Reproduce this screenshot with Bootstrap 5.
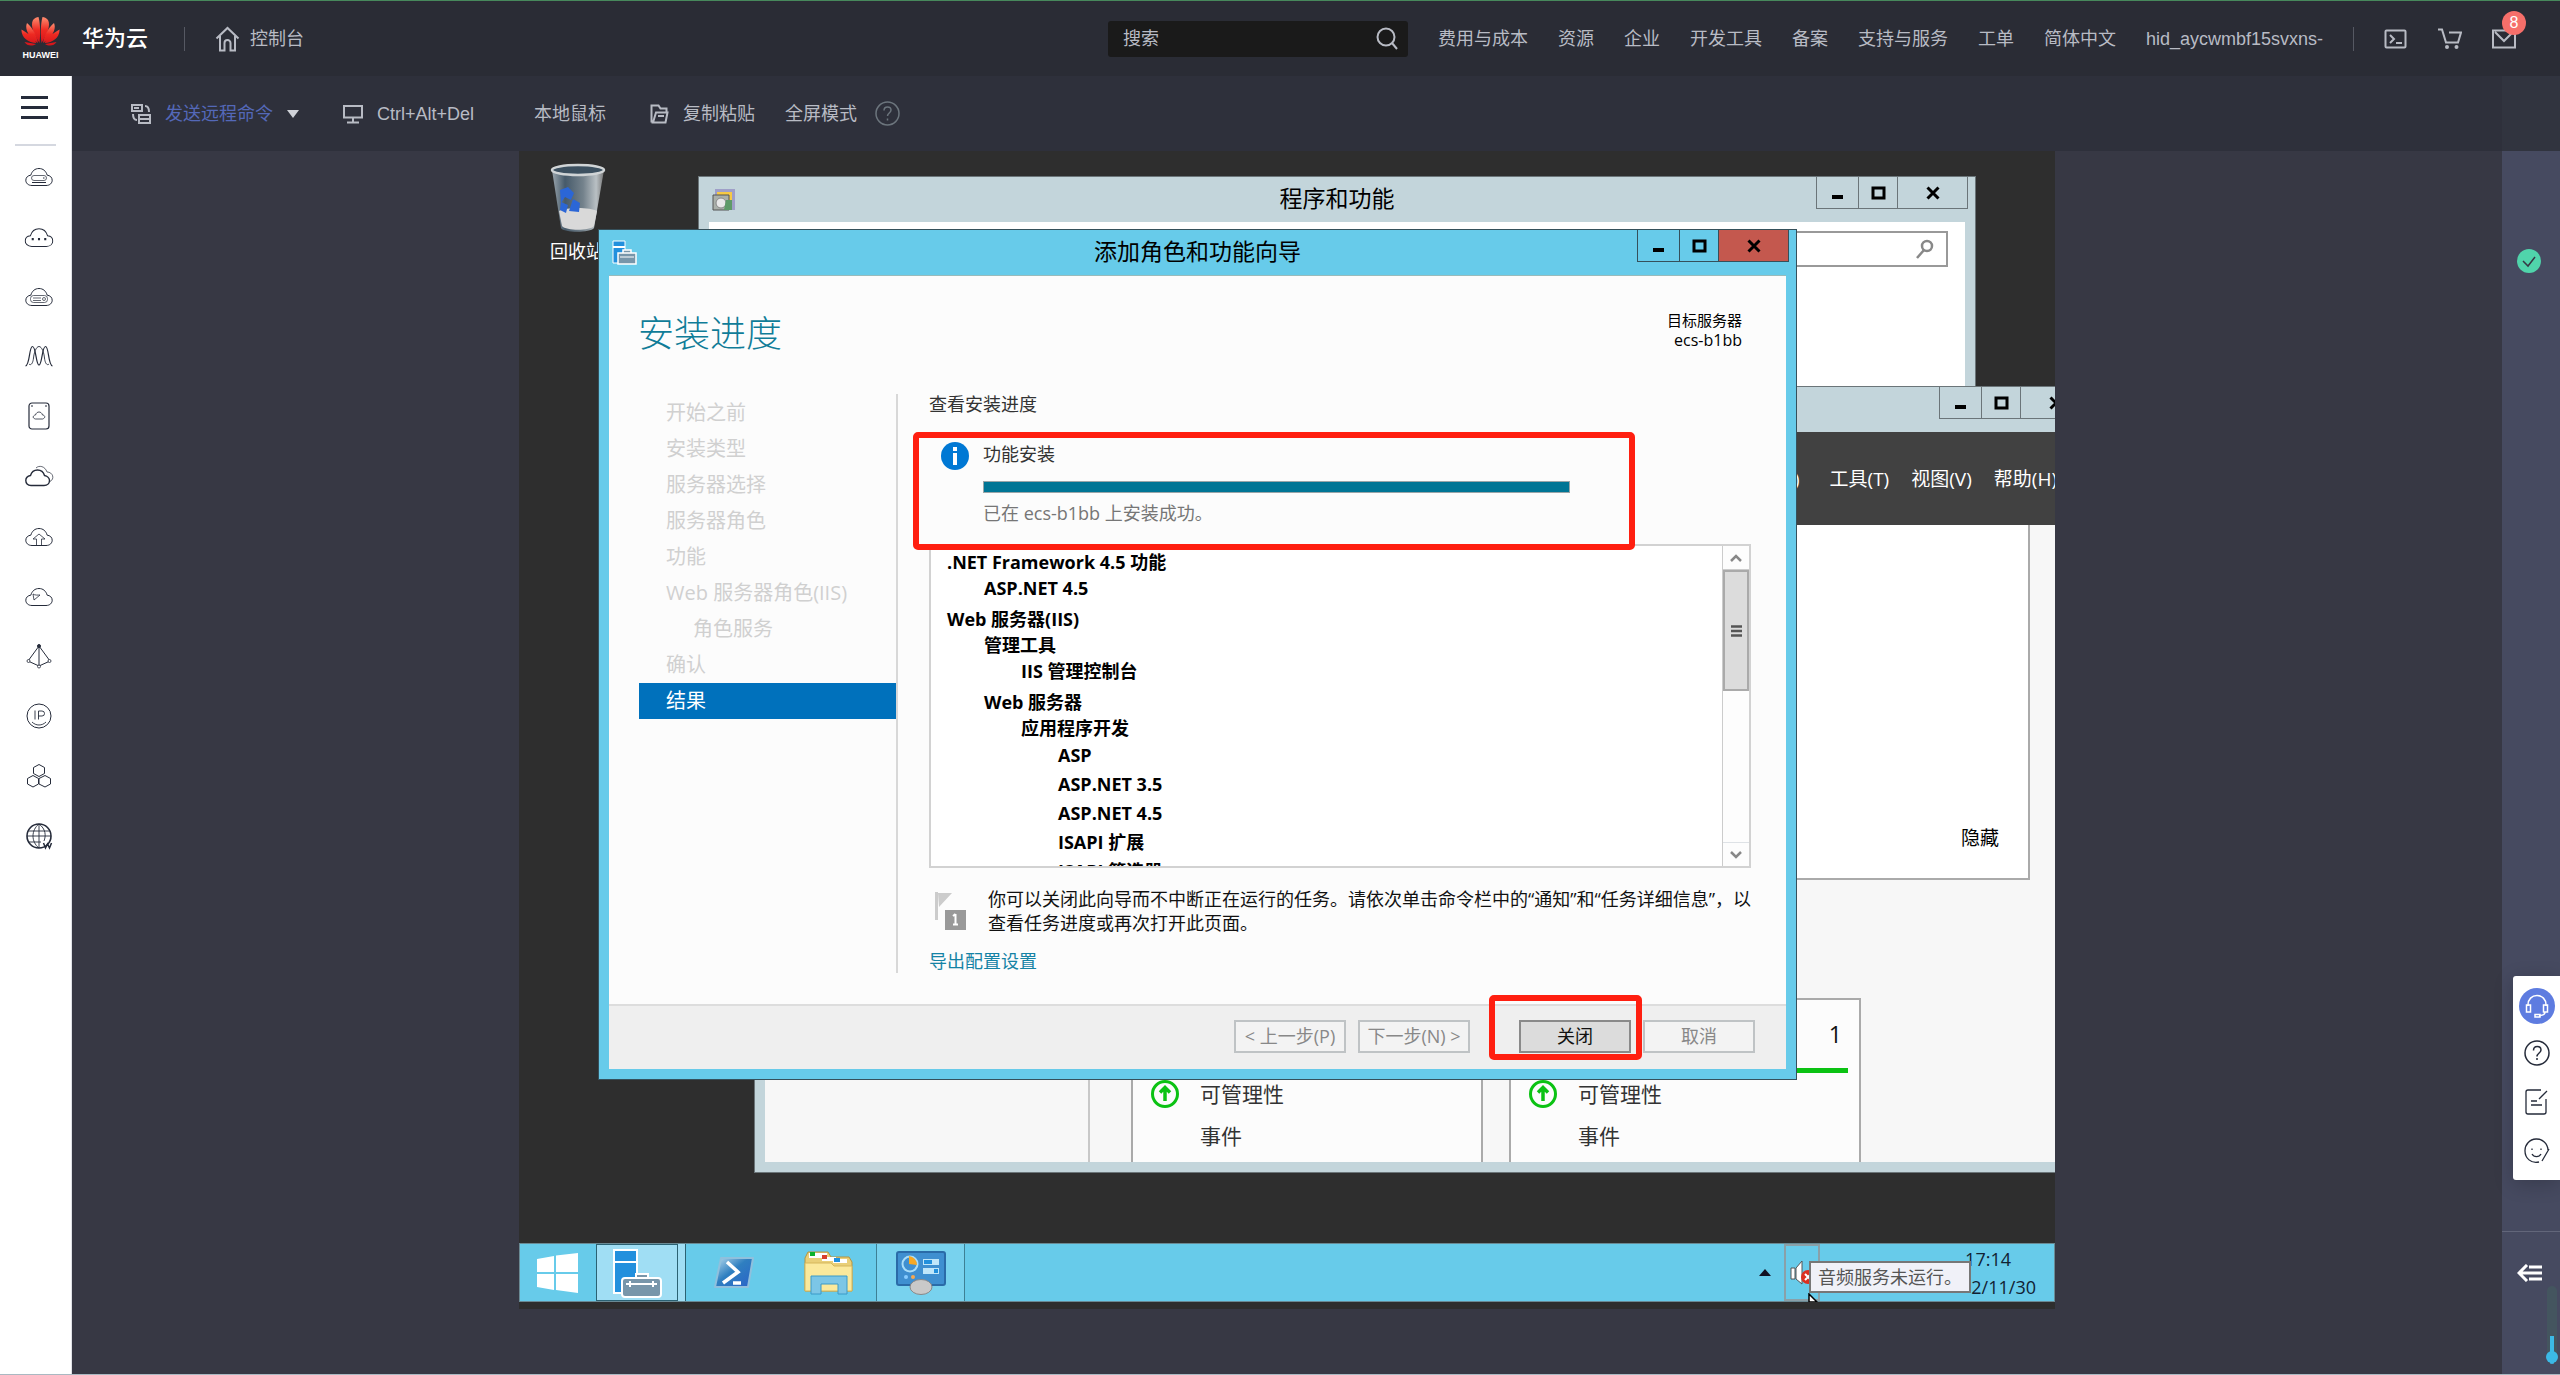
<!DOCTYPE html>
<html lang="zh-CN">
<head>
<meta charset="utf-8">
<meta name="viewport" content="width=device-width, initial-scale=1">
<title>华为云 控制台 - 远程登录</title>
<link href="https://cdn.jsdelivr.net/npm/bootstrap@5.3.0/dist/css/bootstrap.min.css" rel="stylesheet">
<style>
  body{background:#373844;font:18px/24px "Liberation Sans","Noto Sans CJK SC",sans-serif;color:#b8bbc4;overflow-x:hidden}
  a{color:inherit;text-decoration:none}
  button{font:inherit;color:inherit;background:none;border:0;padding:0}
  svg{display:block;flex:none}
  .ico{fill:none;stroke:currentColor}

  /* top bar */
  .topbar{height:76px;background:#2a2c35;border-top:1px solid #47895c;padding:0 44px 0 21px}
  .brand-mark{width:39px}
  .brand-mark span{font:bold 9px/10px "Liberation Sans",sans-serif;color:#fff}
  .brand-name{font-size:22px;font-weight:500;color:#fff;margin:0 36px 0 22px}
  .homelink{margin-left:30px;gap:10px}
  .vline{width:1px;height:24px;background:#565963}
  .searchbox{width:300px;height:36px;background:#1a1a1a;border-radius:3px;padding:0 10px 0 15px}
  .searchbox input,.winsearch input{flex:1;min-width:0;background:none;border:0;outline:0;color:#b8bbc4;padding:0}
  .searchbox input::placeholder{color:#b8bbc4;opacity:1}
  .topnav{gap:30px;margin-left:30px}
  .mailbox .count{position:absolute;left:10px;top:-18px;width:24px;height:24px;border-radius:50%;background:#f66f6a;color:#fff;font-size:16px;text-align:center}

  /* tool bar and side rails */
  .siderail{width:72px;background:#fff;border-right:1px solid #dfe1e6;color:#252b3a}
  .siderail .burger{height:68px;padding:0 0 4px 21px}
  .siderail hr{width:41px;margin:0 0 0 15px;border-top:2px solid #d5d8e0;opacity:1}
  .siderail a{height:60px;padding-left:7px}
  .toolbar{height:75px;background:#2e303b;padding-left:59px}
  .toolbar .cmd{color:#5468b8}
  .toolbar .cmd,.toolbar button{gap:14px;margin-right:44px}
  .toolbar .cad{margin-right:60px}
  .toolbar .paste{margin-right:30px}
  .toolbar .full{margin-right:18px}
  .rightrail{width:58px;background:#464a60}
  .rightrail .railtop{height:75px;background:#31343f}
  .okmark{margin:98px auto 0 15px;width:24px;height:24px;border-radius:50%;background:#50d4ab}
  .helpdock{width:47px;height:204px;margin-top:703px;background:#fff;color:#252b3a;border-radius:3px 0 0 3px;box-shadow:0 4px 20px rgba(0,0,0,.2);padding:12px 0}
  .helpdock a{height:49px}
  .helpdock .agent{width:36px;height:36px;border-radius:50%;background:#5e7ce0;color:#fff}
  .collapse-row{margin-top:51px;border-top:1px solid #62667a;padding:32px 0 0 15px;color:#fff}
  .volume{position:absolute;right:-31px;bottom:44px;width:78px;height:10px;margin:0;transform:rotate(-90deg);appearance:none;border-radius:5px;background:linear-gradient(#3cb9e6,#3cb9e6) 0 50%/28px 4px no-repeat,#44555f}
  .volume::-webkit-slider-thumb{appearance:none;width:12px;height:12px;border-radius:50%;background:#3cb9e6}
  .pageend{height:1px;background:#aab9c2}

  /* remote screen */
  .remote{max-width:1536px;background:#2e2e2e;font-family:"Open Sans","Noto Sans CJK SC",sans-serif;color:#000;padding-bottom:7px}
  .desktop{height:1092px;position:relative;overflow:hidden}
  .binitem{position:absolute;left:31px;top:12px;width:56px;color:#fff;white-space:nowrap}
  .binitem svg{margin-bottom:6px}
  .win{position:absolute;background:#c3d5db;border:1px solid #6b7579;display:flex;flex-direction:column}
  .win.active{background:#67cbea;border-color:#35505b}
  .titlebar{height:45px;display:grid;grid-template-columns:1fr auto 1fr;padding:0 7px}
  .titlebar .wicon{align-self:center;margin-left:6px}
  .titlebar .wtitle{font-size:23px;line-height:43px}
  .winbtns{justify-self:end;height:32px;border:1px solid #6b7579;border-top:0}
  .active .winbtns{border-color:#35505b}
  .winbtns button{width:39px;height:31px;border-right:1px solid #6b7579;display:flex;align-items:center;justify-content:center}
  .winbtns button:first-child{width:42px}
  .winbtns button:last-child{width:69px;border:0}
  .active .winbtns button:not(:last-child){border-color:#35505b}
  .active .winbtns button:last-child{background:#c4584e}
  .winbody{flex:1;margin:0 10px 10px;min-height:0}

  .w-prog{left:179px;top:25px;width:1278px;height:400px}
  .winsearch{width:300px;height:36px;border:2px solid #999;padding:0 12px;margin:9px 17px 0 auto}
  .w-server{left:235px;top:235px;width:1345px;height:787px}
  .w-server .winbody{background:#f7f7f7}
  .srvmenu{height:93px;background:#414141;color:#fff;gap:22px;padding-right:31px;font-size:19px}
  .srvnav{width:325px;border-right:2px solid #c8c8c8}
  .srvmain{padding-left:41px}
  .srvpanel{width:899px;height:355px;background:#fff;border:2px solid #aaa;border-top:0;padding:0 29px 28px;font-size:19px}
  .srvtiles{margin-top:118px;gap:26px}
  .tile{width:352px;background:#fcfcfc;border:2px solid #aaa;border-bottom:0;font-size:21px;color:#333}
  .tilehead{height:73px;margin:0 11px;padding-right:6px;border-bottom:5px solid #0bc213;font-size:23px;color:#111}
  .tilerow{height:42px;padding-left:17px}
  .tilerow .slot{width:50px}

  .w-wizard{left:79px;top:78px;width:1199px;height:851px}
  .w-wizard .winbody{background:#fcfcfc;border-top:1px solid #9bb}
  .wizhead{height:118px;padding:0 44px 0 29px}
  .wizhead h1{font-size:36px;line-height:116px;font-weight:300;color:#107c98;margin:0}
  .wizhead .target{font-size:15px;line-height:20px;padding-top:34px}
  .wizhead .host{font-size:16px}
  .steps{width:289px;padding:1px 0 0 30px;border-right:2px solid #d8d8d8;height:579px;font-size:20px}
  .steps a{display:block;height:36px;line-height:36px;padding-left:27px;color:#d0d0d0;width:257px}
  .steps a.sub{padding-left:54px}
  .steps a.on{background:#0071bc;color:#fff}
  .wizmain{padding-left:31px;color:#333}
  .wizmain .lead-in{line-height:20px}
  .progbox{margin-top:28px;height:102px;padding-left:12px;position:relative}
  .progbox .cell{padding-left:14px}
  .progbox .state{color:#767676}
  .donebar{width:587px;height:12px;border-radius:0;border:1px solid #9aa5a8;background:#e6e6e6;margin:15px 0 8px}
  .donebar .progress-bar{background:#007595}
  .marker{position:absolute;border:6px solid #ff1f10;border-radius:5px;pointer-events:none}
  .progbox .marker{left:-16px;top:-10px;width:722px;height:118px}
  .listbox{width:822px;height:324px;border:2px solid #d2d2d2;background:#fff;color:#000}
  .tree{flex:1;overflow:hidden;padding:3px 0 0 16px;font-weight:700;line-height:26px}
  .tree ul{list-style:none;margin:0;padding:0 0 0 37px}
  .tree>div+div,.tree .sec{margin-top:5px}
  .tree .leaf{line-height:29px}
  .sbar{width:27px;border-left:1px solid #ccc;background:#fdfdfd;color:#888}
  .sbar .end{height:24px;border-bottom:1px solid #ccc}
  .sbar .thumb{height:121px;background:#dcdcdc;border:2px solid #aaa;color:#555}
  .note{padding:19px 0 0 6px;height:81px}
  .note p{margin:0;padding-left:22px;width:800px;color:#111}
  .export{color:#1583a5}
  .wizfoot{height:65px;background:#efefef;border-top:2px solid #ddd;padding:0 31px 2px 0}
  .wizfoot button{width:112px;height:33px;border:2px solid #bfc3c5;background:#f3f3f3;color:#888;line-height:29px}
  .wizfoot button.ok{background:#dcdcdc;border-color:#8a8a8a;color:#111}
  .wizfoot .next{margin-left:12px}
  .wizfoot .okwrap{position:relative;margin:0 12px 0 49px}
  .okwrap .marker{left:-30px;top:-25px;width:153px;height:65px}

  .taskbar{height:59px;background:#67cbea;border:1px solid #6a8a94}
  .taskbar button,.taskbar .stackedge{height:57px;display:flex;align-items:center;justify-content:center}
  .tb-start{width:76px}
  .tb-on{width:82px;background:#a0def4!important;border:1px solid #2b6273!important}
  .stackedge{width:8px;background:#a0def4;border-right:1px solid #2b6273}
  .tb-mid{width:95px}
  .tb-cp{width:89px;background:#78d2ee!important;border:solid #3d8095!important;border-width:0 1px!important}
  .tray{position:relative;padding-right:18px}
  .tb-snd{width:36px;border:2px solid #8aa0a8!important;margin:0 144px 0 13px}
  .clock{width:72px;text-align:right;line-height:28px;color:#123}
  .clock .hour{padding-right:25px}
  .tip{position:absolute;left:50px;top:17px;width:162px;height:32px;background:#f0f1f8;border:2px solid #777;line-height:28px;padding-left:7px;color:#555;white-space:nowrap}
  .cursor{position:absolute;left:49px;top:49px}
</style>
<script src="https://cdn.jsdelivr.net/npm/bootstrap@5.3.0/dist/js/bootstrap.bundle.min.js"></script>
</head>
<body class="min-vh-100 d-flex flex-column">

<svg width="0" height="0" class="position-absolute">
  <symbol id="cloud" viewBox="0 0 28 24"><path d="M7 21.500C3 21.500.8 19 .8 16.200c0-2.800 2.200-4.800 5-5C7 7 10 4.500 14 4.500s7 2.500 8.200 6.700c2.800.2 5 2.200 5 5 0 2.800-2.200 5.300-6.200 5.300z"/></symbol>
  <symbol id="mini" viewBox="0 0 14 14"><path d="M1.500 11h11" stroke-width="4"/></symbol>
  <symbol id="maxi" viewBox="0 0 14 14"><path d="M1.500 2h11v10h-11z" stroke-width="3"/></symbol>
  <symbol id="shut" viewBox="0 0 14 14"><path d="M1.500 1.500l11 11M12.500 1.500l-11 11" stroke-width="3"/></symbol>
  <symbol id="healthy" viewBox="0 0 30 30"><circle cx="15" cy="15" r="12.500" stroke-width="3"/><path d="M15 22V9M10 13.500L15 8.500l5 5" stroke-width="3.500"/></symbol>
</svg>

<header class="topbar d-flex align-items-center">
  <a href="#" class="d-flex align-items-center">
    <span class="brand-mark d-flex flex-column align-items-center gap-1">
      <svg width="39" height="29" viewBox="0 0 39 29"><defs><linearGradient id="hw" x1="0" y1="0" x2="0" y2="1"><stop offset="0" stop-color="#ff8e70"/><stop offset=".5" stop-color="#ee2a22"/><stop offset="1" stop-color="#d3131a"/></linearGradient></defs><g fill="url(#hw)"><path d="M18.500 26C13 17 9 9 12 3c1.500-2 4-3 5.500-3 2 7 2 18 1 26zM20.500 26C26 17 30 9 27 3c-1.500-2-4-3-5.500-3-2 7-2 18-1 26z"/><path d="M17 26C9 21 3 13 6 6c6 5 10 13 11 20zM22 26C30 21 36 13 33 6c-6 5-10 13-11 20zM15.500 26C7 26 0 20 .5 12.500 7 16 13 21 15.500 26zM23.500 26C32 26 39 20 38.500 12.500 32 16 26 21 23.500 26zM15 27C11 29.500 6 29 3.500 25zM24 27c4 2.500 9 2 11.500-2z"/></g></svg>
      <span>HUAWEI</span>
    </span>
    <span class="brand-name">华为云</span>
  </a>
  <span class="vline"></span>
  <a href="#" class="homelink d-flex align-items-center"><svg class="ico" width="25" height="26" viewBox="0 0 25 26" stroke-width="2"><path d="M1.500 12.500L12.500 2l11 10.500M5 10v14.500h4.500V17a3 3 0 0 1 6 0v7.500H20V10"/></svg><span>控制台</span></a>

  <div class="searchbox d-flex align-items-center ms-auto"><input type="text" placeholder="搜索" aria-label="搜索"><svg class="ico" width="22" height="23" viewBox="0 0 22 23" stroke-width="2"><circle cx="10" cy="10" r="8.500"/><path d="M16 16l5 6"/></svg></div>
  <nav class="topnav d-flex align-items-center">
    <a href="#">费用与成本</a><a href="#">资源</a><a href="#">企业</a><a href="#">开发工具</a><a href="#">备案</a><a href="#">支持与服务</a><a href="#">工单</a><a href="#">简体中文</a><a href="#">hid_aycwmbf15svxns-</a>
    <span class="vline"></span>
    <a href="#" aria-label="CloudShell"><svg class="ico" width="24" height="20" viewBox="0 0 24 20" stroke-width="2"><rect x="1.500" y="1.500" width="20" height="17" rx="1"/><path d="M6 6l4 4-4 4M12 14h6"/></svg></a>
    <a href="#" aria-label="购物车"><svg class="ico" width="24" height="22" viewBox="0 0 24 22" stroke-width="2"><path d="M0 1.500h4l4 13h12l3-10H11"/><circle cx="9" cy="19" r="1"/><circle cx="18.500" cy="19" r="1"/></svg></a>
    <a href="#" class="mailbox position-relative" aria-label="消息"><svg class="ico" width="24" height="20" viewBox="0 0 24 20" stroke-width="2"><path d="M1 1.500h22v17H1zM3 3l9 9 9-9"/></svg><span class="count">8</span></a>
  </nav>
</header>

<div class="d-flex flex-grow-1">
  <nav class="siderail d-flex flex-column">
    <button class="burger" aria-label="菜单"><svg class="ico" width="28" height="26" viewBox="0 0 28 26" stroke-width="3"><path d="M0 2.500h27M0 12.500h27M0 22.500h27"/></svg></button>
    <hr>
    <a href="#" class="d-flex align-items-center justify-content-center" aria-label="弹性云服务器"><svg class="ico" width="28" height="24" viewBox="0 0 28 24"><use href="#cloud"/><rect x="6.500" y="11.500" width="15" height="5" rx="2.500" stroke-width=".7"/><path d="M18 14h1.500M7 18.500h14"/></svg></a>
    <a href="#" class="d-flex align-items-center justify-content-center" aria-label="云耀"><svg class="ico" width="30" height="25" viewBox="0 0 28 24"><use href="#cloud"/><path d="M7 14.500h2M13 14.500h2M19 14.500h2" stroke-width="2"/></svg></a>
    <a href="#" class="d-flex align-items-center justify-content-center" aria-label="裸金属"><svg class="ico" width="28" height="24" viewBox="0 0 28 24"><use href="#cloud"/><g stroke-width=".7"><rect x="5.500" y="11.500" width="17" height="7" rx="3"/><path d="M8 14h8M8 16.500h8"/><circle cx="19" cy="15" r="1.500"/></g></svg></a>
    <a href="#" class="d-flex align-items-center justify-content-center" aria-label="弹性伸缩"><svg class="ico" width="28" height="22" viewBox="0 0 28 22" stroke-width="1.200"><path d="M.5 21C5 20 4 1.500 7.500 1.500S11 20 14 20s3-18.500 6.500-18.500S23 20 27.500 21"/><path d="M4 19c2 2 4-1 4.500-6S11 1.500 14 1.500 19 8 19.500 13s2.500 8 4.500 6" stroke-width=".9"/></svg></a>
    <a href="#" class="d-flex align-items-center justify-content-center" aria-label="镜像"><svg class="ico" width="22" height="28" viewBox="0 0 22 28" stroke-width="1.200"><rect x="1" y="1" width="20" height="26" rx="3"/><path d="M3 4h2M17 4h2"/><path d="M7.500 17c-4-1-2-4 0-4 1-4 6-4 7 0 2.500 0 3.500 3 0 4z" stroke-width=".8"/></svg></a>
    <a href="#" class="d-flex align-items-center justify-content-center" aria-label="云硬盘"><svg class="ico" width="29" height="22" viewBox="0 0 29 22"><path d="M6 20.500C2.500 20.500.8 18 .8 15.500S3 11 5.500 10.500C6.500 7 9 5 12.500 5s6 2 7 5.500c2.500.5 5 2.500 5 5s-2 5-5.500 5z" stroke-width="1.400"/><path d="M11 3c3-3 9-2 11 4 6 0 8 7 3 9.500" stroke-width=".7"/></svg></a>
    <a href="#" class="d-flex align-items-center justify-content-center" aria-label="备份"><svg class="ico" width="28" height="24" viewBox="0 0 28 24"><use href="#cloud"/><path d="M11.500 21v-6H8l6-5 6 5h-3.500v6" stroke-width=".8"/></svg></a>
    <a href="#" class="d-flex align-items-center justify-content-center" aria-label="云监控"><svg class="ico" width="28" height="24" viewBox="0 0 28 24"><use href="#cloud"/><path d="M8 10c2 1.500 5 1 7 1l-6 5-1-6" stroke-width=".8"/></svg></a>
    <a href="#" class="d-flex align-items-center justify-content-center" aria-label="弹性负载"><svg class="ico" width="26" height="26" viewBox="0 0 26 26"><path d="M13 3L2 18l11 5 11-5zM13 3v20"/><circle cx="13" cy="3" r="1.500" fill="currentColor"/><g fill="#fff" stroke-width=".8"><circle cx="2.500" cy="18" r="1.500"/><circle cx="23.500" cy="18" r="1.500"/><circle cx="13" cy="23.500" r="1.500"/></g></svg></a>
    <a href="#" class="d-flex align-items-center justify-content-center" aria-label="弹性公网IP"><svg class="ico" width="26" height="26" viewBox="0 0 26 26"><circle cx="13" cy="13" r="12"/><path d="M9 7.500v9M12.500 16.500V8h3.500a2.500 2.500 0 0 1 0 5h-3.500M6 19c4 4 10 4 14 0" stroke-width=".9"/></svg></a>
    <a href="#" class="d-flex align-items-center justify-content-center" aria-label="资源编排"><svg class="ico" width="26" height="26" viewBox="0 0 26 26"><path d="M13 1.500l5.500 3v6L13 13.500l-5.500-3v-6zM7 12.500l5.500 3v5.500L7 24l-5.500-3v-5.500zM19 12.500l5.500 3v5.500L19 24l-6-3v-5.500z"/></svg></a>
    <a href="#" class="d-flex align-items-center justify-content-center" aria-label="域名"><svg class="ico" width="27" height="27" viewBox="0 0 27 27"><circle cx="13" cy="13" r="12" stroke-width="1.600"/><path d="M13 1v24M2 8h22M1 13h24M2 19h13M13 1C5 7 5 19 13 25M13 1c7 5 7 12 5 17" stroke-width=".9"/><path d="M17.500 20l2 5 2-4 2 4 2-5" stroke-width="1.500"/></svg></a>
  </nav>

  <div class="flex-grow-1 d-flex flex-column">
    <div class="toolbar d-flex align-items-center">
      <a href="#" class="cmd d-flex align-items-center">
        <svg width="20" height="20" viewBox="0 0 20 20" fill="none" stroke="#b8bbc4" stroke-width="2"><path d="M1 1h10v6H1zM8 11h11v8H8zM8 15h11M14 2c3 0 4 2 4 6M2 10c0 4 1 6 4 6M3 4h5"/></svg>
        <span>发送远程命令</span>
        <svg width="12" height="8" viewBox="0 0 12 8" fill="#d0d2d8"><path d="M0 0h12L6 8z"/></svg>
      </a>
      <button class="cad d-flex align-items-center"><svg class="ico" width="20" height="20" viewBox="0 0 20 20" stroke-width="2"><path d="M1 2h18v11.500H1zM10 14v4M4 18.500h12"/></svg><span>Ctrl+Alt+Del</span></button>
      <button>本地鼠标</button>
      <button class="paste d-flex align-items-center"><svg class="ico" width="19" height="20" viewBox="0 0 19 20" stroke-width="2"><path d="M1.500 18.500v-17h7l2 3h6v4M1.500 18.500h14l2-10H6l-3 10M8 12h6"/></svg><span>复制粘贴</span></button>
      <button class="full">全屏模式</button>
      <a href="#" class="text-secondary" aria-label="帮助"><svg class="ico" width="25" height="25" viewBox="0 0 25 25" stroke-width="1.500"><circle cx="12.500" cy="12.500" r="11.500"/><path d="M9 9.500c0-5 7-4.500 7-.5 0 3-3.500 3-3.500 6M12.500 17.500v2"/></svg></a>
    </div>

    <main class="remote w-100 mx-auto">
      <div class="desktop">
        <div class="binitem">
          <svg width="56" height="70" viewBox="0 0 56 70"><defs><linearGradient id="bin" x1="0" y1="0" x2="1" y2="0"><stop offset="0" stop-color="#9aa5ad"/><stop offset=".25" stop-color="#465a6a"/><stop offset=".6" stop-color="#74828c"/><stop offset=".85" stop-color="#b9c0c4"/><stop offset="1" stop-color="#777"/></linearGradient></defs><path d="M2 7l9 58c3 5 29 5 33 0L54 7z" fill="url(#bin)"/><ellipse cx="28" cy="7" rx="26" ry="5" fill="#3c5060" stroke="#d0d4d6" stroke-width="2.500"/><path d="M9 48c7-4 31-4 38 0l-3 15c-4 5-28 5-32 0z" fill="#d9d9d9"/><path d="M10 27l8-3 6 6-3 7-6-3-4 6zM23 36l7 4-1 9-10-1zM11 39l7 3-2 8-6-3z" fill="#2b66d6"/></svg>
          <div>回收站</div>
        </div>

        <section class="win w-prog">
          <div class="titlebar">
            <svg class="wicon" width="24" height="24" viewBox="0 0 24 24"><path d="M3 1h20v21H3z" fill="#9f9fc8"/><path d="M5 4h15v8H5z" fill="#f6c945"/><path d="M1 7h16v15H1z" fill="#aab0aa" stroke="#555"/><circle cx="9" cy="15" r="5" fill="#e8e8e8" stroke="#888"/><path d="M14 12h6v10h-8z" fill="#5e9a68"/></svg>
            <span class="wtitle">程序和功能</span>
            <div class="winbtns d-flex"><button aria-label="最小化"><svg class="ico" width="15" height="14"><use href="#mini"/></svg></button><button aria-label="最大化"><svg class="ico" width="15" height="14"><use href="#maxi"/></svg></button><button aria-label="关闭"><svg class="ico" width="14" height="14"><use href="#shut"/></svg></button></div>
          </div>
          <div class="winbody bg-white"><div class="winsearch d-flex align-items-center"><input type="text" aria-label="搜索程序和功能"><svg width="18" height="20" viewBox="0 0 18 20" fill="none" stroke="#888" stroke-width="2.500"><circle cx="11" cy="7" r="5"/><path d="M8 11l-7 8"/></svg></div></div>
        </section>

        <section class="win w-server">
          <div class="titlebar"><span></span><span></span>
            <div class="winbtns d-flex"><button aria-label="最小化"><svg class="ico" width="15" height="14"><use href="#mini"/></svg></button><button aria-label="最大化"><svg class="ico" width="15" height="14"><use href="#maxi"/></svg></button><button aria-label="关闭"><svg class="ico" width="14" height="14"><use href="#shut"/></svg></button></div>
          </div>
          <div class="winbody d-flex flex-column">
            <div class="srvmenu d-flex align-items-center justify-content-end"><a href="#" class="me-2">管理(M)</a><a href="#">工具(T)</a><a href="#">视图(V)</a><a href="#">帮助(H)</a></div>
            <div class="d-flex flex-grow-1">
              <div class="srvnav"></div>
              <div class="srvmain d-flex flex-column">
                <div class="srvpanel d-flex align-items-end justify-content-end"><a href="#">隐藏</a></div>
                <div class="srvtiles d-flex flex-grow-1">
                  <div class="tile"><div class="tilehead"></div>
                    <div class="tilerow d-flex align-items-center"><span class="slot"><svg width="30" height="30" fill="none" stroke="#0bc213"><use href="#healthy"/></svg></span>可管理性</div>
                    <div class="tilerow d-flex align-items-center"><span class="slot"></span>事件</div></div>
                  <div class="tile"><div class="tilehead d-flex align-items-center justify-content-end">1</div>
                    <div class="tilerow d-flex align-items-center"><span class="slot"><svg width="30" height="30" fill="none" stroke="#0bc213"><use href="#healthy"/></svg></span>可管理性</div>
                    <div class="tilerow d-flex align-items-center"><span class="slot"></span>事件</div></div>
                </div>
              </div>
            </div>
          </div>
        </section>

        <section class="win active w-wizard">
          <div class="titlebar">
            <svg class="wicon" width="25" height="26" viewBox="0 0 25 26"><path d="M1 1h12v22H1z" fill="#2290dd" stroke="#fff"/><path d="M1 7h12" stroke="#fff" stroke-width="2"/><path d="M6 13h18v11H6zM11 13v-3h8v3" fill="#7896aa" stroke="#fff" stroke-width="1.500"/><path d="M8 17h14" stroke="#fff"/></svg>
            <span class="wtitle">添加角色和功能向导</span>
            <div class="winbtns d-flex"><button aria-label="最小化"><svg class="ico" width="15" height="14"><use href="#mini"/></svg></button><button aria-label="最大化"><svg class="ico" width="15" height="14"><use href="#maxi"/></svg></button><button aria-label="关闭"><svg class="ico" width="14" height="14"><use href="#shut"/></svg></button></div>
          </div>
          <div class="winbody d-flex flex-column">
            <div class="wizhead d-flex justify-content-between"><h1>安装进度</h1><div class="target text-end">目标服务器<br><span class="host">ecs-b1bb</span></div></div>
            <div class="d-flex flex-grow-1">
              <nav class="steps">
                <a href="#">开始之前</a><a href="#">安装类型</a><a href="#">服务器选择</a><a href="#">服务器角色</a><a href="#">功能</a><a href="#">Web 服务器角色(IIS)</a><a href="#" class="sub">角色服务</a><a href="#">确认</a><a href="#" class="on">结果</a>
              </nav>
              <div class="wizmain">
                <div class="lead-in">查看安装进度</div>
                <div class="progbox d-flex align-items-start">
                  <svg width="28" height="28" viewBox="0 0 28 28"><circle cx="14" cy="14" r="14" fill="#0078d4"/><path d="M12 11h4v12h-4zM12 5h4v4h-4z" fill="#fff"/></svg>
                  <div class="cell">
                    <div>功能安装</div>
                    <div class="progress donebar" role="progressbar" aria-valuenow="100" aria-valuemin="0" aria-valuemax="100"><div class="progress-bar" style="width:100%"></div></div>
                    <div class="state">已在 ecs-b1bb 上安装成功。</div>
                  </div>
                  <span class="marker"></span>
                </div>
                <div class="listbox d-flex">
                  <div class="tree">
                    <div>.NET Framework 4.5 功能<ul><li>ASP.NET 4.5</li></ul></div>
                    <div>Web 服务器(IIS)
                      <ul><li>管理工具<ul><li>IIS 管理控制台</li></ul></li>
                        <li class="sec">Web 服务器<ul><li>应用程序开发<ul class="leaf"><li>ASP</li><li>ASP.NET 3.5</li><li>ASP.NET 4.5</li><li>ISAPI 扩展</li><li>ISAPI 筛选器</li></ul></li></ul></li></ul></div>
                  </div>
                  <div class="sbar d-flex flex-column">
                    <div class="end d-flex align-items-center justify-content-center"><svg class="ico" width="12" height="8" stroke-width="2.500"><path d="M1 7l5-5 5 5"/></svg></div>
                    <div class="thumb d-flex align-items-center justify-content-center"><svg class="ico" width="11" height="12" stroke-width="2.500"><path d="M0 1.500h11M0 6h11M0 10.500h11"/></svg></div>
                    <div class="end d-flex align-items-center justify-content-center mt-auto border-top border-bottom-0"><svg class="ico" width="12" height="8" stroke-width="2.500"><path d="M1 1l5 5 5-5"/></svg></div>
                  </div>
                </div>
                <div class="note d-flex align-items-start">
                  <svg width="31" height="44" viewBox="0 0 31 44"><path d="M0 5h3v28H0zM3 6h14L4 20z" fill="#ccc"/><path d="M10 23h21v20H10z" fill="#999"/><path d="M20.500 27v10M18 29l2.500-2M18 37.500h5" stroke="#fff" stroke-width="2" fill="none"/></svg>
                  <p>你可以关闭此向导而不中断正在运行的任务。请依次单击命令栏中的“通知”和“任务详细信息”，以查看任务进度或再次打开此页面。</p>
                </div>
                <a href="#" class="export">导出配置设置</a>
              </div>
            </div>
            <div class="wizfoot d-flex align-items-center justify-content-end">
              <button disabled>&lt; 上一步(P)</button><button disabled class="next">下一步(N) &gt;</button>
              <div class="okwrap"><button class="ok">关闭</button><span class="marker"></span></div>
              <button disabled>取消</button>
            </div>
          </div>
        </section>
      </div>

      <div class="taskbar d-flex align-items-center">
        <button class="tb-start" aria-label="开始"><svg width="42" height="40" viewBox="0 0 42 40" fill="#fff"><path d="M0 6l17-3v16H0zM19 2.600L41 0v19H19zM0 21h17v16L0 34zM19 21h22v19l-22-3z"/></svg></button>
        <button class="tb-on" aria-label="服务器管理器"><svg width="50" height="50" viewBox="0 0 50 50"><path d="M2 2h23v43H2z" fill="#2290dd" stroke="#fff" stroke-width="2"/><path d="M2 14h23" stroke="#fff" stroke-width="2"/><path d="M24 30v-4h12v4" fill="#7896aa" stroke="#fff" stroke-width="2"/><rect x="10" y="30" width="39" height="19" rx="3" fill="#7896aa" stroke="#fff" stroke-width="2"/><path d="M14 36h31M18 33v6M41 33v6" stroke="#fff" stroke-width="2"/></svg></button>
        <span class="stackedge"></span>
        <button class="tb-mid" aria-label="PowerShell"><svg width="42" height="34" viewBox="0 0 42 34"><defs><linearGradient id="ps" x1="0" y1="0" x2="1" y2="1"><stop offset="0" stop-color="#b8dcee"/><stop offset=".45" stop-color="#2f7fc0"/><stop offset="1" stop-color="#2a62c8"/></linearGradient></defs><path d="M8 2h32l-5 29H2z" fill="url(#ps)" stroke="#8fc0dd" stroke-width="2" stroke-linejoin="round"/><path d="M14 6l11 10-15 11M20 27h8" stroke="#fff" stroke-width="3.500" fill="none"/></svg></button>
        <button class="tb-mid" aria-label="文件资源管理器"><svg width="50" height="46" viewBox="0 0 50 46"><path d="M1 8l3-6h20l3 5h18l3 5v29H1z" fill="#e9cf78" stroke="#b59440"/><path d="M5 3h18v5H5zM18 7h14v4H18zM29 9h14v4H29z" fill="#fff"/><path d="M6 2h5v4H6z" fill="#0db32b"/><path d="M18 5h5v4h-5z" fill="#d8402c"/><path d="M30 8h6v4h-6z" fill="#1e90e0"/><path d="M1 13h26l3 3h18v25H1z" fill="#fbe99c" stroke="#d5b75c"/><path d="M7 44V26h36v18h-9V34H17v10z" fill="#7cc6e6" stroke="#3a9ac8"/></svg></button>
        <button class="tb-cp" aria-label="控制面板"><svg width="50" height="44" viewBox="0 0 50 44"><rect x="1" y="1" width="48" height="33" rx="2" fill="#3f8fd0" stroke="#2a6ba8" stroke-width="2"/><circle cx="14" cy="13" r="7.500" fill="none" stroke="#a8dcf8" stroke-width="2"/><path d="M13 13V5a9 9 0 0 1 8 9z" fill="#f7a823"/><path d="M27 8h16v6H27zM27 17h16v6H27z" fill="#bfe6fa"/><path d="M28 9h8v4h-8zM38 18h4v4h-4z" fill="#2290dd"/><circle cx="10" cy="26" r="2" fill="#8cf"/><circle cx="17" cy="26" r="2" fill="#f7a850"/><ellipse cx="25" cy="36" rx="11" ry="7.500" fill="#c9c9c9" stroke="#888"/></svg></button>
        <div class="tray d-flex align-items-center ms-auto">
          <svg width="12" height="7" viewBox="0 0 12 7"><path d="M0 7h12L6 0z" fill="#112"/></svg>
          <button class="tb-snd" aria-label="音量"><svg width="24" height="26" viewBox="0 0 24 26"><path d="M1 8h4v11H1zM6 8l6-7v23l-6-5z" fill="#fff" stroke="#555"/><circle cx="18" cy="17" r="7" fill="#dc3020"/><path d="M15 14l6 6M21 14l-6 6" stroke="#fff" stroke-width="2"/></svg></button>
          <div class="clock"><div class="hour">17:14</div><div>2/11/30</div></div>
          <div class="tip">音频服务未运行。</div>
          <svg class="cursor" width="10" height="9" viewBox="0 0 10 9"><path d="M1 9V1l8 8z" fill="#fff" stroke="#000" stroke-width="1.500"/></svg>
        </div>
      </div>
    </main>
  </div>

  <aside class="rightrail position-relative">
    <div class="railtop"></div>
    <div class="okmark"><svg width="24" height="24" viewBox="0 0 24 24" fill="none" stroke="#373844" stroke-width="1.500"><path d="M6 12l5 5 7-9"/></svg></div>
    <div class="helpdock ms-auto">
      <a href="#" class="agent d-flex align-items-center justify-content-center mx-auto" aria-label="客服"><svg class="ico" width="24" height="24" viewBox="0 0 24 24" stroke-width="1.500"><path d="M3 12C2 -2 22 -2 21 12M1.500 11h4v7h-4zM18.500 11h4v7h-4zM20 18c0 3-3 3.500-6 3.500M10 20.500h5v2.500h-5z"/></svg></a>
      <a href="#" class="d-flex align-items-center justify-content-center mt-1" aria-label="帮助"><svg class="ico" width="26" height="26" viewBox="0 0 26 26" stroke-width="1.500"><circle cx="13" cy="13" r="12"/><path d="M9.500 10.500c0-5.500 7.500-5 7.500-.5 0 3-4 3-4 6.500M13 18v2"/></svg></a>
      <a href="#" class="d-flex align-items-center justify-content-center" aria-label="反馈"><svg class="ico" width="24" height="26" viewBox="0 0 24 26" stroke-width="1.300"><path d="M16 1H3a2 2 0 0 0-2 2v20a2 2 0 0 0 2 2h16a2 2 0 0 0 2-2V10M22 2l-8 8M6 12h6M6 16h11"/></svg></a>
      <a href="#" class="d-flex align-items-center justify-content-center" aria-label="评价"><svg class="ico" width="26" height="26" viewBox="0 0 26 26" stroke-width="1.300"><path d="M15 24C7 26 1 20 1 13a11.500 11.500 0 0 1 23-1M25 11l-7 12M8 16c2 3.500 7 3.500 9 0M8 10.500v1.500M17 10.500v1.500"/></svg></a>
    </div>
    <div class="collapse-row"><button aria-label="展开"><svg class="ico" width="26" height="18" viewBox="0 0 26 18" stroke-width="3"><path d="M10 1L2 9l8 8M3 9h22M12 3h13M12 15h13"/></svg></button></div>
    <input class="volume" type="range" min="0" max="100" value="2" aria-label="音量">
  </aside>
</div>
<div class="pageend"></div>
</body>
</html>
